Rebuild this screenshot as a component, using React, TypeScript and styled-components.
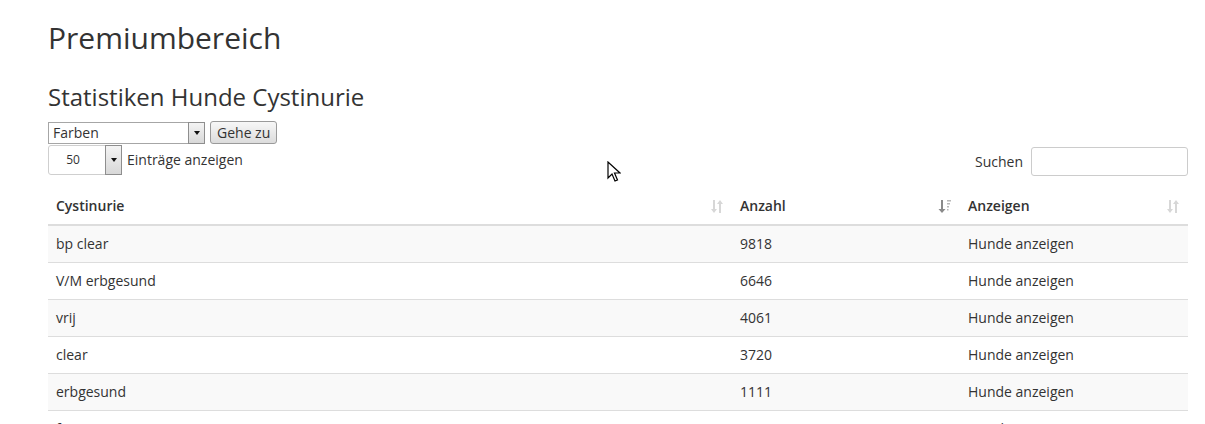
import styled, { createGlobalStyle } from 'styled-components'

const GlobalStyle = createGlobalStyle`
    html, body {
        margin: 0;
        padding: 0;
        background: #fff;
    }
    body {
        font-family: "Open Sans", "Liberation Sans", sans-serif;
        font-size: 14px;
        color: #333;
    }
`

const Page = styled.div`
    position: relative;
    width: 1140px;
    padding: 21px 0 0 48px;
    height: 403px;
    overflow: hidden;
`

const Title = styled.h1`
    margin: 0;
    font-size: 30px;
    line-height: 33px;
    font-weight: 400;
    color: #333;
`

const SubTitle = styled.h2`
    margin: 29px 0 0 0;
    font-size: 24px;
    line-height: 27px;
    font-weight: 400;
    color: #333;
`

const JumpForm = styled.div`
    display: flex;
    align-items: center;
    gap: 5px;
    margin-top: 11px;
    height: 23px;
`

const FakeSelect = styled.div<{ width: number; height: number; rounded?: boolean }>`
    display: flex;
    align-items: stretch;
    width: ${p => p.width}px;
    height: ${p => p.height}px;
    box-sizing: border-box;
    border: 1px solid ${p => (p.rounded ? '#cfcfcf' : '#a6a6a6')};
    border-radius: ${p => (p.rounded ? '3px' : '0')};
    background: #fff;
    font-size: ${p => (p.rounded ? '12px' : '14px')};
    color: #333;
`

const SelectValue = styled.span<{ center?: boolean }>`
    flex: 1;
    display: flex;
    align-items: center;
    justify-content: ${p => (p.center ? 'center' : 'flex-start')};
    padding-left: ${p => (p.center ? '0' : '4px')};
    padding-right: ${p => (p.center ? '8px' : '0')};
`

const SelectArrow = styled.span<{ w: number }>`
    width: ${p => p.w}px;
    display: flex;
    align-items: center;
    justify-content: center;
    box-sizing: border-box;
    border: 1px solid #8e8e8e;
    margin: -1px -1px -1px 0;
    background: linear-gradient(#f4f4f4, #d8d8d8);
    &::after {
        content: "";
        border-left: 3px solid transparent;
        border-right: 3px solid transparent;
        border-top: 4px solid #111;
    }
`

const GoButton = styled.button`
    height: 23px;
    padding: 0 6px;
    font-family: "Open Sans", "Liberation Sans", sans-serif;
    font-size: 14px;
    color: #333;
    border: 1px solid #9a9a9a;
    border-radius: 3px;
    background: linear-gradient(#f7f7f7, #dcdcdc);
`

const Toolbar = styled.div`
    display: flex;
    justify-content: space-between;
    align-items: center;
    margin-top: 2px;
    height: 30px;
`

const LengthLabel = styled.label`
    display: flex;
    align-items: center;
    gap: 5px;
    font-size: 14px;
    margin-top: -3px;
`

const SearchLabel = styled.label`
    display: flex;
    align-items: center;
    gap: 8px;
    font-size: 14px;
`

const SearchInput = styled.input`
    width: 157px;
    height: 29px;
    box-sizing: border-box;
    border: 1px solid #ccc;
    border-radius: 3px;
`

const Table = styled.table`
    width: 1140px;
    margin-top: 12px;
    border-collapse: collapse;
    table-layout: fixed;
`

const HeadCell = styled.th<{ w: number }>`
    box-sizing: border-box;
    width: ${p => p.w}px;
    text-align: left;
    padding: 8px 30px 8px 8px;
    line-height: 20px;
    font-size: 14px;
    font-weight: 600;
    color: #333;
    border-bottom: 2px solid #ddd;
    position: relative;
`

const SortMark = styled.span`
    position: absolute;
    right: 8px;
    top: 11px;
    display: flex;
`

const Row = styled.tr<{ striped: boolean }>`
    background: ${p => (p.striped ? '#f9f9f9' : '#fff')};
`

const Cell = styled.td`
    padding: 8px;
    line-height: 20px;
    font-size: 14px;
    color: #333;
    border-top: 1px solid #ddd;
`

const Cursor = styled.svg`
    position: absolute;
    left: 607px;
    top: 161px;
`

function SortBoth() {
    return (
        <svg width="14" height="15" viewBox="0 0 14 15">
            <g fill="#d7d7d7">
                <rect x="3" y="1" width="2" height="10" />
                <path d="M1 10 L7 10 L4 14 Z" />
                <rect x="9" y="4" width="2" height="10" />
                <path d="M7 5 L13 5 L10 1 Z" />
            </g>
        </svg>
    )
}

function SortDesc() {
    return (
        <svg width="14" height="15" viewBox="0 0 14 15">
            <g fill="#8a8a8a">
                <rect x="3" y="1" width="2" height="10" />
                <path d="M0.5 10 L7.5 10 L4 14 Z" />
            </g>
            <g fill="#b8b8b8">
                <rect x="9" y="1" width="4" height="1.5" />
                <rect x="9" y="4" width="3" height="1.5" />
                <rect x="9" y="7" width="2" height="1.5" />
                <rect x="9" y="10" width="1.5" height="1.5" />
            </g>
        </svg>
    )
}

const rows = [
    { name: 'bp clear', count: 9818 },
    { name: 'V/M erbgesund', count: 6646 },
    { name: 'vrij', count: 4061 },
    { name: 'clear', count: 3720 },
    { name: 'erbgesund', count: 1111 },
    { name: 'frei', count: 854 },
]

export default function App() {
    return (
        <Page>
            <GlobalStyle />
            <Title>Premiumbereich</Title>
            <SubTitle>Statistiken Hunde Cystinurie</SubTitle>
            <JumpForm>
                <FakeSelect width={157} height={22}>
                    <SelectValue>Farben</SelectValue>
                    <SelectArrow w={17} />
                </FakeSelect>
                <GoButton>Gehe zu</GoButton>
            </JumpForm>
            <Toolbar>
                <LengthLabel>
                    <FakeSelect width={74} height={30} rounded>
                        <SelectValue center>50</SelectValue>
                        <SelectArrow w={17} />
                    </FakeSelect>
                    Einträge anzeigen
                </LengthLabel>
                <SearchLabel>
                    Suchen
                    <SearchInput type="search" />
                </SearchLabel>
            </Toolbar>
            <Table>
                <thead>
                    <tr>
                        <HeadCell w={684}>Cystinurie<SortMark><SortBoth /></SortMark></HeadCell>
                        <HeadCell w={228}>Anzahl<SortMark><SortDesc /></SortMark></HeadCell>
                        <HeadCell w={228}>Anzeigen<SortMark><SortBoth /></SortMark></HeadCell>
                    </tr>
                </thead>
                <tbody>
                    {rows.map((r, i) => (
                        <Row key={r.name} striped={i % 2 === 0}>
                            <Cell>{r.name}</Cell>
                            <Cell>{r.count}</Cell>
                            <Cell>Hunde anzeigen</Cell>
                        </Row>
                    ))}
                </tbody>
            </Table>
            <Cursor width="14" height="22" viewBox="0 0 14 22">
                <path d="M1 1 L1 17 L5 13 L8 20 L10.5 19 L7.5 12 L13 12 Z" fill="#fff" stroke="#000" strokeWidth="1.2" strokeLinejoin="miter" />
            </Cursor>
        </Page>
    )
}
